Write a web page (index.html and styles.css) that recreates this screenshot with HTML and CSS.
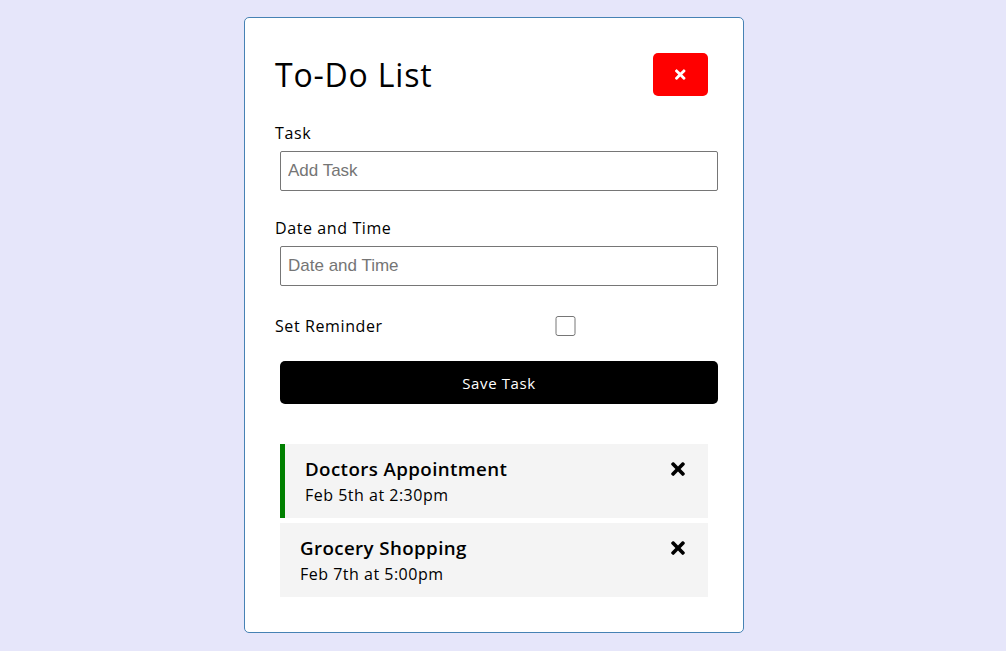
FILE: index.html
```html
<!DOCTYPE html>
<html lang="en">
<head>
<meta charset="utf-8">
<title>Task Tracker</title>
<link rel="stylesheet" href="styles.css">
</head>
<body>
<div class="container">
  <header class="header">
    <h1>To-Do List</h1>
    <button class="btn btn-close" aria-label="Close">
      <svg class="close-icon" viewBox="0 0 352 512"><path d="M242.72 256l100.07-100.07c12.28-12.28 12.28-32.19 0-44.48l-22.24-22.24c-12.28-12.28-32.19-12.28-44.48 0L176 189.28 75.93 89.21c-12.28-12.28-32.19-12.28-44.48 0L9.21 111.45c-12.28 12.28-12.28 32.19 0 44.48L109.28 256 9.21 356.07c-12.28 12.28-12.28 32.19 0 44.48l22.24 22.24c12.28 12.28 32.2 12.28 44.48 0L176 322.72l100.07 100.07c12.28 12.28 32.2 12.28 44.48 0l22.24-22.24c12.28-12.28 12.28-32.19 0-44.48L242.72 256z"/></svg>
    </button>
  </header>
  <form class="add-form">
    <div class="form-control">
      <label>Task</label>
      <input type="text" placeholder="Add Task">
    </div>
    <div class="form-control">
      <label>Date and Time</label>
      <input type="text" placeholder="Date and Time">
    </div>
    <div class="form-control form-control-check">
      <label>Set Reminder</label>
      <input type="checkbox">
    </div>
    <input type="submit" value="Save Task" class="btn btn-block">
  </form>
  <div class="task reminder">
    <h3>Doctors Appointment
      <svg class="del-icon" viewBox="0 0 352 512"><path d="M242.72 256l100.07-100.07c12.28-12.28 12.28-32.19 0-44.48l-22.24-22.24c-12.28-12.28-32.19-12.28-44.48 0L176 189.28 75.93 89.21c-12.28-12.28-32.19-12.28-44.48 0L9.21 111.45c-12.28 12.28-12.28 32.19 0 44.48L109.28 256 9.21 356.07c-12.28 12.28-12.28 32.19 0 44.48l22.24 22.24c12.28 12.28 32.2 12.28 44.48 0L176 322.72l100.07 100.07c12.28 12.28 32.2 12.28 44.48 0l22.24-22.24c12.28-12.28 12.28-32.19 0-44.48L242.72 256z"/></svg>
    </h3>
    <p>Feb 5th at 2:30pm</p>
  </div>
  <div class="task">
    <h3>Grocery Shopping
      <svg class="del-icon" viewBox="0 0 352 512"><path d="M242.72 256l100.07-100.07c12.28-12.28 12.28-32.19 0-44.48l-22.24-22.24c-12.28-12.28-32.19-12.28-44.48 0L176 189.28 75.93 89.21c-12.28-12.28-32.19-12.28-44.48 0L9.21 111.45c-12.28 12.28-12.28 32.19 0 44.48L109.28 256 9.21 356.07c-12.28 12.28-12.28 32.19 0 44.48l22.24 22.24c12.28 12.28 32.2 12.28 44.48 0L176 322.72l100.07 100.07c12.28 12.28 32.2 12.28 44.48 0l22.24-22.24c12.28-12.28 12.28-32.19 0-44.48L242.72 256z"/></svg>
    </h3>
    <p>Feb 7th at 5:00pm</p>
  </div>
</div>
</body>
</html>
```

FILE: styles.css
```css
* {
  box-sizing: border-box;
  margin: 0;
  padding: 0;
}

body {
  font-family: "Open Sans", "DejaVu Sans", sans-serif;
  background: #e6e6fa;
  color: #000;
  padding-right: 18px;
}

.container {
  max-width: 500px;
  margin: 17px auto;
  overflow: auto;
  min-height: 300px;
  border: 1px solid steelblue;
  padding: 30px;
  border-radius: 5px;
  background: #fff;
}

.header {
  display: flex;
  justify-content: space-between;
  align-items: center;
  margin-bottom: 20px;
}

.header h1 {
  font-size: 32px;
  font-weight: 400;
  line-height: 48px;
  letter-spacing: 0.8px;
}

.btn {
  display: inline-block;
  background: #000;
  color: #fff;
  border: none;
  padding: 10px 20px;
  margin: 5px;
  border-radius: 5px;
  cursor: pointer;
  font-size: 15px;
  font-family: inherit;
  letter-spacing: 0.6px;
}

.btn-close {
  background: red;
  width: 55px;
  height: 43px;
  display: flex;
  align-items: center;
  justify-content: center;
  padding: 0;
}

.close-icon {
  width: 10.5px;
  height: 15.2px;
  fill: #fff;
}

.add-form {
  margin-bottom: 40px;
}

.form-control {
  margin: 20px 0;
}

.form-control label {
  display: block;
  font-size: 16px;
  line-height: 25px;
  letter-spacing: 0.6px;
}

.form-control input {
  width: 100%;
  height: 40px;
  margin: 5px;
  padding: 3px 7px;
  font-size: 17px;
  font-family: "Liberation Sans", Arial, sans-serif;
  border: 1px solid #767676;
  border-radius: 2px;
}

.form-control input::placeholder {
  color: #757575;
}

.form-control-check {
  display: flex;
  align-items: center;
  justify-content: space-between;
}

.form-control-check label {
  flex: 1;
}

.form-control-check input {
  flex: 2;
  height: 20px;
}

.btn-block {
  display: block;
  width: 100%;
  height: 43px;
}

.task {
  background: #f4f4f4;
  margin: 5px;
  padding: 10px 20px;
  cursor: pointer;
}

.task.reminder {
  border-left: 5px solid green;
}

.task h3 {
  display: flex;
  align-items: center;
  justify-content: space-between;
  font-size: 18.72px;
  font-weight: 600;
  line-height: 29px;
  letter-spacing: 0.4px;
}

.task p {
  font-size: 16px;
  line-height: 25px;
  letter-spacing: 0.5px;
}

.del-icon {
  width: 14px;
  height: 20px;
  margin-right: 3px;
  fill: #000;
}
```
